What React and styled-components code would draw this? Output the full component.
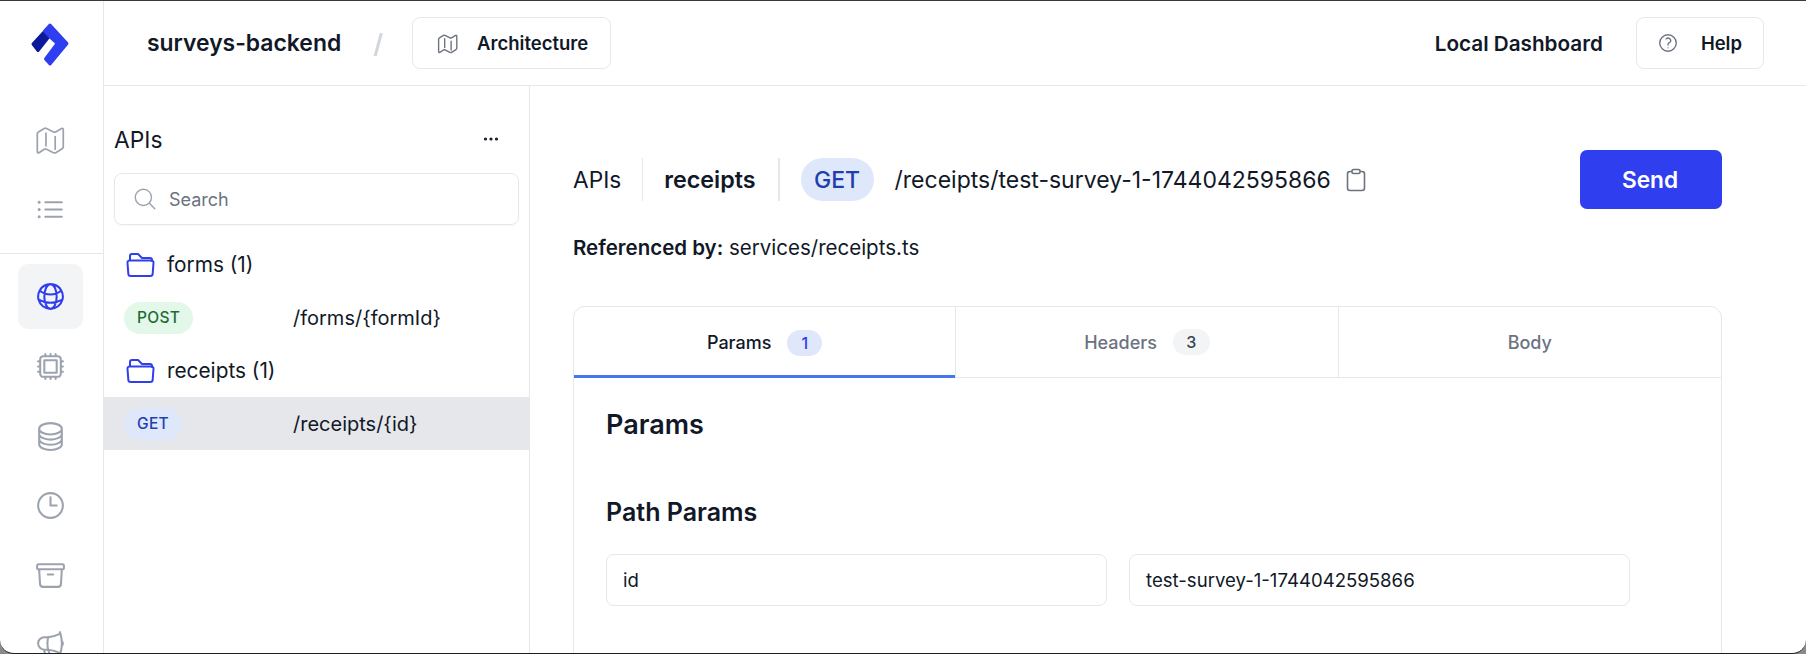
import React from "react";
import styled, { createGlobalStyle } from "styled-components";
import {
  HiOutlineListBullet, HiOutlineGlobeAlt, HiOutlineCpuChip, HiOutlineCircleStack,
  HiOutlineClock, HiOutlineArchiveBox, HiOutlineMegaphone, HiOutlineQuestionMarkCircle,
  HiOutlineMagnifyingGlass, HiOutlineEllipsisHorizontal,
} from "react-icons/hi2";

const Global = createGlobalStyle`
  html, body { margin: 0; padding: 0; background: #8a8a8a; overflow: hidden; }
  body { font-family: Inter, "Liberation Sans", sans-serif; color: #111827; }
  * { box-sizing: border-box; }
`;

const Window = styled.div`
  width: 1806px; height: 654px; display: flex; overflow: hidden; background: #fff;
  border-top: 1px solid #3a3a3a; border-bottom: 1px solid #1f1f1f;
  border-radius: 0 0 14px 14px;
`;
const Rail = styled.nav`
  width: 104px; flex: none; display: flex; flex-direction: column; border-right: 1px solid #e5e7eb;
`;
const LogoBox = styled.div`
  height: 107px; flex: none;
  svg { display: block; margin-left: 30px; margin-top: 20px; }
`;
const RailGroup = styled.div`
  display: flex; flex-direction: column; align-items: center; gap: 4.6px; padding: ${p => p.$top ? "0 3px 12px 0" : "10px 3px 0 0"};
  ${p => p.$top ? "border-bottom: 1px solid #e5e7eb;" : ""}
`;
const RailButton = styled.div`
  width: 65px; height: ${p => p.$top ? 64.4 : 65}px; flex: none; display: flex; align-items: center; justify-content: center;
  border-radius: 10px; background: ${p => p.$active ? "#f3f4f6" : "transparent"};
  color: ${p => p.$active ? "#2f3eee" : "#9ca3af"};
  svg { width: 33px; height: 33px; stroke-width: 1.5; }
`;
const Content = styled.div`flex: 1; min-width: 0; display: flex; flex-direction: column;`;
const Header = styled.header`
  height: 85px; flex: none; display: flex; align-items: center; padding: 0 42px 0 43px; border-bottom: 1px solid #e5e7eb;
`;
const Title = styled.div`font-size: 22.9px; font-weight: 600;`;
const Slash = styled.div`font-size: 26px; font-weight: 600; color: #d1d5db; margin: 0 29px 0 32px;`;
const HeadButton = styled.div`
  height: 52px; display: flex; align-items: center; padding: ${p => p.$pad}; gap: ${p => p.$gap}px;
  border: 1px solid #e5e7eb; border-radius: 8px; font-size: 18.5px; font-weight: 600;
  svg { width: 22px; height: 22px; color: #6b7280; flex: none; }
`;
const Spacer = styled.div`flex: 1;`;
const Dash = styled.div`font-size: 20.7px; font-weight: 600; margin-right: 33px;`;
const Body = styled.div`flex: 1; min-height: 0; display: flex;`;
const ListPanel = styled.aside`
  width: 426px; flex: none; border-right: 1px solid #e5e7eb; padding-top: 36px; display: flex; flex-direction: column;
`;
const ListHead = styled.div`
  display: flex; align-items: center; justify-content: space-between; padding: 0 27px 0 10px; height: 34px; font-size: 22.8px; font-weight: 400;
  svg { width: 22px; height: 22px; color: #111827; stroke-width: 2; }
`;
const Search = styled.div`
  margin: 17px 10px 13px 10px; height: 52px; flex: none; display: flex; align-items: center; gap: 11px; padding: 0 17px;
  border: 1px solid #e5e7eb; border-radius: 8px; box-shadow: 0 1px 2px rgba(0,0,0,.04);
  font-size: 18px; color: #6b7280;
  svg { width: 26px; height: 26px; color: #9ca3af; stroke-width: 1.3; }
`;
const Row = styled.div`
  height: 53px; flex: none; display: flex; align-items: center; font-size: ${p => p.$size}px; padding-left: ${p => p.$pad}px;
  background: ${p => p.$selected ? "#e5e7eb" : "transparent"};
`;
const FolderSvg = styled.svg`
  width: 30px; height: 26px; margin-right: 11px; flex: none; color: #2f3eee;
`;
const Pill = styled.span`
  display: inline-flex; align-items: center; justify-content: center; height: 32px; border-radius: 16px; padding: 0 13px;
  font-size: 15.5px; font-weight: 500; letter-spacing: 0.3px;
  background: ${p => p.$bg}; color: ${p => p.$fg};
`;
const RouteCell = styled.div`width: 169px; flex: none; display: flex;`;
const Main = styled.main`flex: 1; min-width: 0; padding: 64px 84px 0 43px; display: flex; flex-direction: column;`;
const TopRow = styled.div`height: 59px; flex: none; display: flex; align-items: center; font-size: 22.7px;`;
const Crumb = styled.div`
  height: 43px; display: flex; align-items: center; padding-right: ${p => p.$pr}px; margin-right: ${p => p.$mr}px;
  border-right: ${p => p.$w}px solid #e5e7eb; font-weight: ${p => p.$bold ? 600 : 400}; font-size: ${p => p.$bold ? "23.3px" : "22.7px"};
`;
const MethodBadge = styled.div`
  height: 43px; width: 73px; display: flex; align-items: center; justify-content: center; border-radius: 22px; background: #dfe8fa; color: #1e40af;
  font-size: 23px; font-weight: 500; margin-right: 21px;
`;
const PathText = styled.div`font-size: 23px; white-space: nowrap;`;
const CopySvg = styled.svg`width: 20px; height: 24px; color: #6b7280; margin-left: 15px; flex: none;`;
const Send = styled.button`
  margin-left: auto; width: 142px; height: 59px; border: 0; border-radius: 7px; background: #2f3eee; color: #fff;
  font: 600 22.7px Inter, sans-serif; padding: 0 2px 0 0;
`;
const Ref = styled.div`
  font-size: 20.5px; margin-top: 28px; line-height: 22px; flex: none;
  b { font-weight: 600; }
`;
const Card = styled.section`
  margin-top: 47px; flex: 1 0 400px; border: 1px solid #e5e7eb; border-radius: 12px 12px 0 0;
`;
const Tabs = styled.div`display: grid; grid-template-columns: repeat(3, 1fr); height: 71px; border-bottom: 1px solid #e5e7eb;`;
const Tab = styled.div`
  display: flex; align-items: center; justify-content: center; gap: 16px; font-size: 18px; font-weight: 500;
  color: ${p => p.$active ? "#111827" : "#6b7280"};
  box-shadow: ${p => p.$active ? "inset 0 -3px 0 #4478ee" : "none"};
  margin-bottom: ${p => p.$active ? "-1px" : "0"};
  ${p => p.$last ? "" : "border-right: 1px solid #e5e7eb;"}
`;
const Count = styled.span`
  width: ${p => p.$w}px; height: 26px; border-radius: 13px; display: flex; align-items: center; justify-content: center;
  font-size: 16px; font-weight: 500;
  background: ${p => p.$active ? "#e0e7fb" : "#f3f4f6"}; color: ${p => p.$active ? "#2f3eee" : "#374151"};
`;
const CardBody = styled.div`padding: 28px 91px 0 32px;`;
const H2 = styled.h2`margin: 0; font-size: 27px; line-height: 38px; font-weight: 600;`;
const H3 = styled.h3`margin: 49px 0 0; font-size: 25px; line-height: 38px; font-weight: 600;`;
const Fields = styled.div`display: grid; grid-template-columns: 1fr 1fr; gap: 22px; margin-top: 23px;`;
const Field = styled.div`
  height: 52px; display: flex; align-items: center; padding: 0 16px; border: 1px solid #e5e7eb; border-radius: 8px; font-size: 18.6px;
`;

const Logo = () => (
  <svg width="40" height="46" viewBox="30 20 40 46" fill="none">
    <path d="M33 43 L44.5 30.5 L49 35.5 L38 49.5 Z" fill="#0b1a9a" stroke="#0b1a9a" strokeWidth="3" strokeLinejoin="round" />
    <path d="M50 24 L67 42.5 L50 63 L45.5 58 L56 44 Q57 42.5 56 41.5 L50.5 36.5 L44.5 30 Z" fill="#2f3eee" stroke="#2f3eee" strokeWidth="3" strokeLinejoin="round" />
  </svg>
);

const MapGlyph = ({ size, weight }) => (
  <svg style={{ width: size, height: size }} viewBox="0 0 26 26" fill="none" stroke="currentColor" strokeWidth={weight} strokeLinejoin="round" strokeLinecap="round">
    <path d="M2 7.5 Q2 6.5 3 6 L8 3 Q9 2.5 10 3 L16 6 Q17 6.5 18 6 L23 3 Q24.5 2.5 24.5 4 V19 Q24.5 20 23.5 20.5 L18 24 Q17 24.5 16 24 L10 21 Q9 20.5 8 21 L3.5 24 Q2 24.5 2 23 Z" />
    <path d="M9.5 7 V18 M17.5 10 V21" />
  </svg>
);

const Folder = () => (
  <FolderSvg viewBox="0 0 30 26" fill="none" stroke="currentColor" strokeWidth="2" strokeLinejoin="round" strokeLinecap="round">
    <path d="M4 8 V4 a2 2 0 0 1 2-2 h6 l4 4 h8 a2 2 0 0 1 2 2 V9" />
    <path d="M3.5 8.5 h22 a2 2 0 0 1 2 2.2 l-0.8 10.8 a2.5 2.5 0 0 1-2.5 2.5 h-19.4 a2.5 2.5 0 0 1-2.5-2.5 L1.5 10.7 a2 2 0 0 1 2-2.2 z" />
  </FolderSvg>
);

const Copy = () => (
  <CopySvg viewBox="0 0 20 24" fill="none" stroke="currentColor" strokeWidth="1.6" strokeLinejoin="round">
    <path d="M6 3.5 H4 a2.5 2.5 0 0 0-2.5 2.5 V20 a2.5 2.5 0 0 0 2.5 2.5 H16 a2.5 2.5 0 0 0 2.5-2.5 V6 a2.5 2.5 0 0 0-2.5-2.5 H14" />
    <rect x="6" y="1.5" width="8" height="4" rx="1.5" />
  </CopySvg>
);

export default function App() {
  return (
    <>
      <Global />
      <Window>
        <Rail>
          <LogoBox><Logo /></LogoBox>
          <RailGroup $top>
            <RailButton $top><MapGlyph size={30} weight={1.5} /></RailButton>
            <RailButton $top><HiOutlineListBullet /></RailButton>
          </RailGroup>
          <RailGroup>
            <RailButton $active><HiOutlineGlobeAlt /></RailButton>
            <RailButton><HiOutlineCpuChip /></RailButton>
            <RailButton><HiOutlineCircleStack /></RailButton>
            <RailButton><HiOutlineClock /></RailButton>
            <RailButton><HiOutlineArchiveBox /></RailButton>
            <RailButton><HiOutlineMegaphone /></RailButton>
          </RailGroup>
        </Rail>
        <Content>
          <Header>
            <Title>surveys-backend</Title>
            <Slash>/</Slash>
            <HeadButton $gap={19} $pad="0 22px 0 24px"><MapGlyph size={21} weight={1.7} />Architecture</HeadButton>
            <Spacer />
            <Dash>Local Dashboard</Dash>
            <HeadButton $gap={22} $pad="0 21px 0 20px"><HiOutlineQuestionMarkCircle />Help</HeadButton>
          </Header>
          <Body>
            <ListPanel>
              <ListHead>APIs<HiOutlineEllipsisHorizontal /></ListHead>
              <Search><HiOutlineMagnifyingGlass />Search</Search>
              <Row $pad={22} $size={20.8}><Folder />forms (1)</Row>
              <Row $pad={20} $size={20}><RouteCell><Pill $bg="#e3f8e8" $fg="#1f6b37">POST</Pill></RouteCell>/forms/{"{formId}"}</Row>
              <Row $pad={22} $size={20.8}><Folder />receipts (1)</Row>
              <Row $pad={20} $size={20} $selected><RouteCell><Pill $bg="#dfe8fa" $fg="#1e40af">GET</Pill></RouteCell>/receipts/{"{id}"}</Row>
            </ListPanel>
            <Main>
              <TopRow>
                <Crumb $pr={21} $mr={21} $w={1}>APIs</Crumb>
                <Crumb $pr={22} $mr={21} $w={2} $bold>receipts</Crumb>
                <MethodBadge>GET</MethodBadge>
                <PathText>/receipts/test-survey-1-1744042595866</PathText>
                <Copy />
                <Send>Send</Send>
              </TopRow>
              <Ref><b>Referenced by:</b> services/receipts.ts</Ref>
              <Card>
                <Tabs>
                  <Tab $active>Params<Count $active $w={35}>1</Count></Tab>
                  <Tab>Headers<Count $w={37}>3</Count></Tab>
                  <Tab $last>Body</Tab>
                </Tabs>
                <CardBody>
                  <H2>Params</H2>
                  <H3>Path Params</H3>
                  <Fields>
                    <Field>id</Field>
                    <Field>test-survey-1-1744042595866</Field>
                  </Fields>
                </CardBody>
              </Card>
            </Main>
          </Body>
        </Content>
      </Window>
    </>
  );
}
